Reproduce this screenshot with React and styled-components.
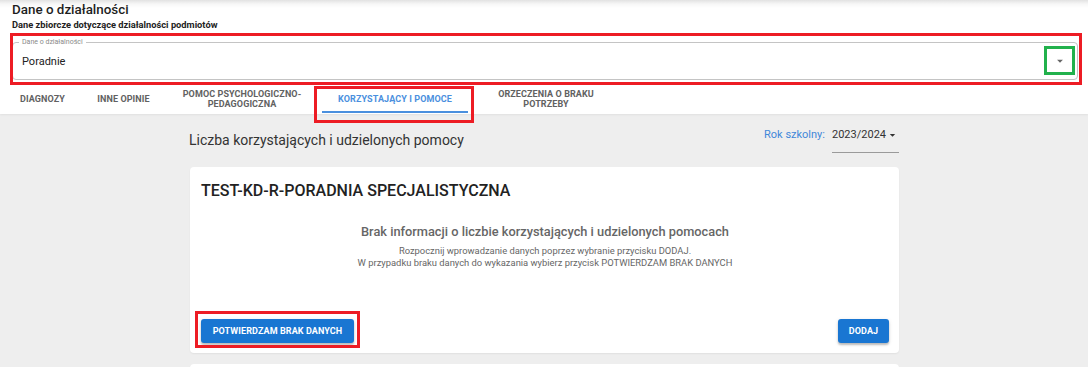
import React from "react";
import styled, { createGlobalStyle } from "styled-components";

const Global = createGlobalStyle`
  * { box-sizing: border-box; }
  html, body { margin: 0; padding: 0; }
  body {
    background: #eeeeee;
    font-family: Roboto, "Liberation Sans", Arial, sans-serif;
    color: #222;
    -webkit-font-smoothing: antialiased;
  }
`;

const Page = styled.div`
  width: 1088px;
  height: 367px;
  overflow: hidden;
  background: #eeeeee;
`;

const Header = styled.header`
  background: linear-gradient(#e2e2e2 0px, #f7f7f7 4px, #ffffff 8px);
  padding: 1px 0 0 0;
  box-shadow: 0 1px 2px rgba(0, 0, 0, 0.06);
`;

const Title = styled.h1`
  margin: 0 0 0 12px;
  font-size: 13.4px;
  line-height: 18px;
  font-weight: 500;
  color: #1e1e1e;
`;

const Subtitle = styled.div`
  margin: 0 0 0 12px;
  font-size: 9.3px;
  line-height: 12px;
  font-weight: 700;
  color: #222;
`;

const SelectBox = styled.div`
  position: relative;
  margin: 11px 10px 0 12px;
  height: 38px;
  border: 1px solid #c4c4c4;
  border-radius: 4px;
  display: flex;
  align-items: center;
  padding: 0 9px;
`;

const FloatLabel = styled.span`
  position: absolute;
  top: -5px;
  left: 6px;
  padding: 0 3px;
  background: #fff;
  font-size: 7px;
  line-height: 8px;
  color: #8a8a8a;
`;

const SelectValue = styled.span`
  flex: 1;
  font-size: 11px;
  line-height: 14px;
  color: #222;
  padding-top: 1px;
`;

const Mark = styled.span`
  position: absolute;
  border: 3px solid ${(p) => (p.$green ? "#22b14c" : "#ed1c24")};
  pointer-events: none;
  top: ${(p) => p.$t}px;
  left: ${(p) => p.$l}px;
  right: ${(p) => p.$r}px;
  bottom: ${(p) => p.$b}px;
`;

const ArrowCell = styled.span`
  position: absolute;
  right: 2px;
  top: 3px;
  width: 31px;
  height: 29px;
  border: 3px solid #22b14c;
  display: flex;
  align-items: center;
  justify-content: center;
  color: #666;
`;

const Tabs = styled.nav`
  display: flex;
  margin-top: 6px;
  height: 28px;
`;

const Tab = styled.div`
  position: relative;
  width: ${(p) => p.$w}px;
  display: flex;
  align-items: center;
  justify-content: center;
  text-align: center;
  font-size: 9px;
  line-height: 10px;
  font-weight: 700;
  letter-spacing: 0.1px;
  text-transform: uppercase;
  color: ${(p) => (p.$active ? "#4a8fde" : "#616161")};
  padding-bottom: 3px;
  &::after {
    content: "";
    display: ${(p) => (p.$active ? "block" : "none")};
    position: absolute;
    left: 0;
    right: 0;
    bottom: 1px;
    height: 2px;
    background: #4a8fde;
  }
`;

const Main = styled.main`
  width: 710px;
  margin: 0 auto;
  padding-top: 12px;
`;

const HeadRow = styled.div`
  display: flex;
  justify-content: space-between;
  align-items: flex-start;
`;

const SectionTitle = styled.h2`
  margin: 0;
  font-size: 14px;
  line-height: 28px;
  font-weight: 400;
  color: #333;
`;

const Year = styled.div`
  display: flex;
  align-items: flex-start;
  gap: 7px;
  font-size: 11px;
  line-height: 18px;
`;

const YearLabel = styled.span`
  color: #3f87d9;
`;

const YearSelect = styled.div`
  width: 67px;
  display: flex;
  justify-content: space-between;
  align-items: center;
  padding-bottom: 8px;
  border-bottom: 1px solid #9a9a9a;
  color: #333;
  svg { margin-right: 0; }
`;

const Card = styled.section`
  position: relative;
  background: #fff;
  border-radius: 4px;
  box-shadow: 0 1px 2px rgba(0, 0, 0, 0.06);
  margin-top: ${(p) => p.$mt}px;
  margin-left: 1px;
  width: 709px;
  padding: 14px 10px 10px 11px;
`;

const CardTitle = styled.h3`
  margin: 0;
  font-size: 16px;
  line-height: 20px;
  font-weight: 500;
  color: #222;
`;

const Empty = styled.div`
  margin-top: 23px;
  text-align: center;
  color: #666;
`;

const EmptyTitle = styled.div`
  font-size: 12.8px;
  line-height: 16px;
  font-weight: 500;
  margin-bottom: 5px;
`;

const EmptyLine = styled.div`
  font-size: 9.4px;
  line-height: 12px;
`;

const Actions = styled.div`
  margin-top: 50px;
  display: flex;
  justify-content: space-between;
`;

const BtnWrap = styled.div`
  position: relative;
`;

const Button = styled.button`
  height: 24px;
  width: ${(p) => p.$w}px;
  border: 0;
  border-radius: 3px;
  background: #1976d2;
  color: #fff;
  font-family: Roboto, "Liberation Sans", Arial, sans-serif;
  font-size: 9px;
  font-weight: 700;
  letter-spacing: 0.1px;
  text-transform: uppercase;
  box-shadow: 0 2px 2px rgba(0, 0, 0, 0.22), 0 1px 4px rgba(0, 0, 0, 0.1);
  padding: 0;
`;

const Arrow = () => (
  <svg width="14" height="14" viewBox="0 0 24 24" fill="currentColor">
    <path d="M7 10l5 5 5-5z" />
  </svg>
);

export default function App() {
  return (
    <Page>
      <Global />
      <Header>
        <Title>Dane o działalności</Title>
        <Subtitle>Dane zbiorcze dotyczące działalności podmiotów</Subtitle>
        <SelectBox>
          <FloatLabel>Dane o działalności</FloatLabel>
          <SelectValue>Poradnie</SelectValue>
          <ArrowCell>
            <Arrow />
          </ArrowCell>
          <Mark $t={-10} $l={-3} $r={-5} $b={-6} />
        </SelectBox>
        <Tabs>
          <Tab $w={85}>Diagnozy</Tab>
          <Tab $w={77}>Inne opinie</Tab>
          <Tab $w={160}>
            Pomoc psychologiczno-
            <br />
            pedagogiczna
          </Tab>
          <Tab $w={146} $active>
            Korzystający i pomoce
            <Mark $t={0} $l={-8} $r={-6} $b={-9} />
          </Tab>
          <Tab $w={156}>
            Orzeczenia o braku
            <br />
            potrzeby
          </Tab>
        </Tabs>
      </Header>
      <Main>
        <HeadRow>
          <SectionTitle>Liczba korzystających i udzielonych pomocy</SectionTitle>
          <Year>
            <YearLabel>Rok szkolny:</YearLabel>
            <YearSelect>
              <span>2023/2024</span>
              <Arrow />
            </YearSelect>
          </Year>
        </HeadRow>
        <Card $mt={13}>
          <CardTitle>TEST-KD-R-PORADNIA SPECJALISTYCZNA</CardTitle>
          <Empty>
            <EmptyTitle>
              Brak informacji o liczbie korzystających i udzielonych pomocach
            </EmptyTitle>
            <EmptyLine>
              Rozpocznij wprowadzanie danych poprzez wybranie przycisku DODAJ.
            </EmptyLine>
            <EmptyLine>
              W przypadku braku danych do wykazania wybierz przycisk POTWIERDZAM
              BRAK DANYCH
            </EmptyLine>
          </Empty>
          <Actions>
            <BtnWrap>
              <Button $w={153}>Potwierdzam brak danych</Button>
              <Mark $t={-8} $l={-6} $r={-6} $b={-5} />
            </BtnWrap>
            <Button $w={51}>Dodaj</Button>
          </Actions>
        </Card>
        <Card $mt={11} style={{ height: 40 }} />
      </Main>
    </Page>
  );
}
